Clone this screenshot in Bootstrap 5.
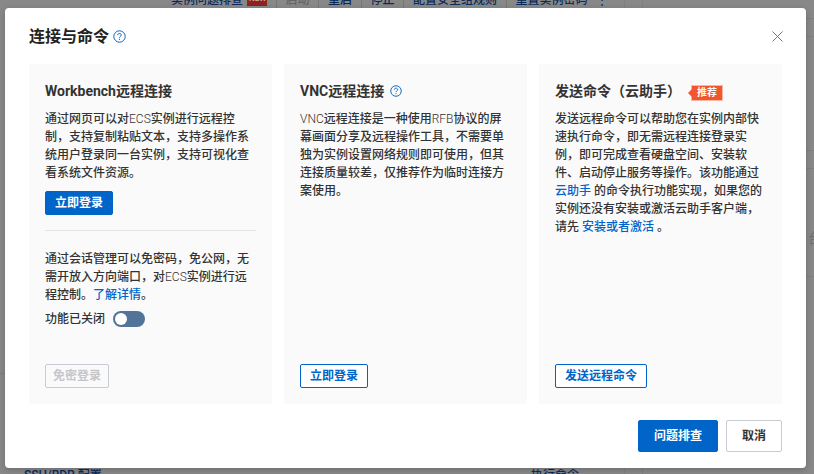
<!doctype html>
<html lang="zh">
<head>
<meta charset="utf-8">
<title>连接与命令</title>
<link href="https://cdn.jsdelivr.net/npm/bootstrap@5.3.0/dist/css/bootstrap.min.css" rel="stylesheet">
<style>
html,body{height:100%;margin:0;overflow:hidden;background:#888;}
body{font-family:Roboto,"Noto Sans CJK SC",sans-serif;font-size:12px;color:#333;position:relative;}
.bg-top{height:8px;overflow:hidden;color:#0b2a5c;font-size:12px;line-height:12px;}
.bg-top-in{margin-top:-6px;margin-left:171px;white-space:nowrap;font-weight:500;}
.bg-new{background:#8c2420;color:#d8b0ac;font-size:8px;line-height:10px;padding:0 2px;height:12px;width:20px;margin-left:4px;overflow:hidden;}
.bg-off{color:#666;}
.bg-sep{width:1px;height:14px;background:#777;margin:0 8.75px;}
.bg-foot{position:absolute;bottom:0;height:5px;overflow:hidden;color:#0b2a5c;font-size:12px;line-height:12px;font-weight:500;}
.bg-line-v{position:absolute;top:0;bottom:0;width:1px;background:#808080;}
.bg-line-h{position:absolute;height:1px;background:#7e7e7e;}
.bg-glyph{position:absolute;left:808px;top:230px;color:#6e6e6e;font-size:14px;line-height:16px;}
.dlg{position:absolute;left:5px;top:8px;width:801px;height:460px;background:#fff;border-radius:4px;box-shadow:0 2px 6px rgba(0,0,0,.2);padding:0 24px;}
.dlg-head{height:56px;padding-top:1px;gap:4px;}
.dlg-title{font-size:16px;font-weight:700;color:#222;line-height:24px;margin:0;}
.qmark{display:inline-block;flex:none;}
.x-btn{position:absolute;right:23px;top:23px;padding:0;border:0;background:none;line-height:0;}
.panels{gap:12px;height:340px;}
.pane{flex:1 1 0;background:#fafafa;padding:16px;min-width:0;}
.pane-title{font-size:14px;font-weight:700;color:#333;line-height:22px;margin:0 0 8px;height:22px;gap:6px;}
.pane-text{line-height:18px;margin:0;color:#333;font-weight:500;width:212px;}
.pane-text a{color:#0064c8;text-decoration:none;}
.pane-text i{font-style:normal;font-weight:300;}
.btn-solid,.btn-line,.btn-off{font-size:12px;font-weight:700;line-height:22px;height:24px;padding:0 9px;border-radius:2px;}
.btn-solid{background:#0064c8;border:1px solid #0064c8;color:#fff;}
.btn-line{background:#fff;border:1px solid #0064c8;color:#0064c8;}
.btn-off,.btn-off:disabled{background:#fafafa;border:1px solid #c8ccd2;color:#c4c6ca;opacity:1;padding:0 7px;}
.btn-bottom{align-self:flex-start;}
.gap-btn{margin-top:9px;}
.rule{height:1px;background:#e3e3e3;margin:15px 0 19px;border:0;opacity:1;width:211px;}
.sw-row{margin-top:7px;height:16px;gap:8px;line-height:16px;font-weight:500;}
.sw{width:32px;height:16px;background:#527498;border-radius:8px;position:relative;flex:none;}
.sw::after{content:"";position:absolute;left:2px;top:2px;width:12px;height:12px;border-radius:50%;background:#fff;}
.tag{background:#f2562f;color:#fff;font-size:10px;font-weight:700;line-height:14px;height:14px;padding:0 5px;position:relative;margin:3px 0 0 5px;box-shadow:0 0 0 1px #fbb7a6;}
.tag::before{content:"";position:absolute;left:-4px;top:3px;border:4px solid transparent;border-left:0;border-right:4px solid #f2562f;}
.dlg-foot{gap:8px;padding-top:16px;}
.ft-btn{height:32px;font-size:12px;font-weight:700;line-height:30px;padding:0;border-radius:2px;}
.ft-main{width:80px;background:#0064c8;border:1px solid #0064c8;color:#fff;}
.ft-plain{width:56px;background:#fff;border:1px solid #c8ccd2;color:#333;}
</style>
</head>
<body>
<div class="bg-top"><div class="bg-top-in d-flex"><span>实例问题排查</span><span class="bg-new">NEW</span><span class="bg-sep"></span><span class="bg-off">启动</span><span class="bg-sep"></span><span>重启</span><span class="bg-sep"></span><span>停止</span><span class="bg-sep"></span><span>配置安全组规则</span><span class="bg-sep"></span><span>重置实例密码</span><span class="ms-2">⋮</span></div></div>
<div class="bg-line-v" style="left:624px"></div>
<div class="bg-line-v" style="left:642px"></div>
<div class="bg-line-h" style="left:0;width:5px;top:373px"></div>
<div class="bg-line-h" style="left:806px;width:8px;top:18px"></div>
<div class="bg-line-h" style="left:806px;width:8px;top:36px"></div>
<div class="bg-line-h" style="left:806px;width:8px;top:150px"></div>
<div class="bg-line-h" style="left:806px;width:8px;top:168px"></div>
<div class="bg-line-h" style="left:806px;width:8px;top:276px"></div>
<div class="bg-glyph">台</div>
<div class="bg-foot" style="left:24px">SSH/RDP 配置</div>
<div class="bg-foot" style="left:531px">执行命令</div>
<div class="dlg">
  <div class="dlg-head d-flex align-items-center">
    <h1 class="dlg-title">连接与命令</h1>
    <svg class="qmark" width="13" height="13" viewBox="0 0 13 13" fill="none" stroke="#0064c8"><circle cx="6.5" cy="6.5" r="5.7"/><path d="M4.7 5.2c0-1.1.8-1.8 1.8-1.8s1.8.7 1.8 1.6c0 1.3-1.8 1.3-1.8 2.7"/><path d="M6.5 8.8v1.1"/></svg>
  </div>
  <button class="x-btn" type="button" aria-label="关闭"><svg width="11" height="11" viewBox="0 0 11 11" stroke="#777" fill="none"><path d="M.5.5l10 10M10.5.5l-10 10"/></svg></button>
  <div class="panels d-flex">
    <div class="pane d-flex flex-column">
      <h2 class="pane-title">Workbench远程连接</h2>
      <p class="pane-text">通过网页可以对<i>ECS</i>实例进行远程控制，支持复制粘贴文本，支持多操作系统用户登录同一台实例，支持可视化查看系统文件资源。</p>
      <div class="gap-btn"><button class="btn btn-solid" type="button">立即登录</button></div>
      <hr class="rule">
      <p class="pane-text">通过会话管理可以免密码，免公网，无需开放入方向端口，对<i>ECS</i>实例进行远程控制。<a href="#">了解详情</a>。</p>
      <div class="sw-row d-flex align-items-center"><span>功能已关闭</span><span class="sw"></span></div>
      <button class="btn btn-off btn-bottom mt-auto" type="button" disabled>免密登录</button>
    </div>
    <div class="pane d-flex flex-column">
      <h2 class="pane-title d-flex align-items-center">VNC远程连接
        <svg class="qmark" width="12" height="12" viewBox="0 0 13 13" fill="none" stroke="#0064c8"><circle cx="6.5" cy="6.5" r="5.7"/><path d="M4.7 5.2c0-1.1.8-1.8 1.8-1.8s1.8.7 1.8 1.6c0 1.3-1.8 1.3-1.8 2.7"/><path d="M6.5 8.8v1.1"/></svg>
      </h2>
      <p class="pane-text"><i>VNC</i>远程连接是一种使用<i>RFB</i>协议的屏幕画面分享及远程操作工具，不需要单独为实例设置网络规则即可使用，但其连接质量较差，仅推荐作为临时连接方案使用。</p>
      <button class="btn btn-line btn-bottom mt-auto" type="button">立即登录</button>
    </div>
    <div class="pane d-flex flex-column">
      <h2 class="pane-title d-flex align-items-center">发送命令（云助手）<span class="tag">推荐</span></h2>
      <p class="pane-text">发送远程命令可以帮助您在实例内部快速执行命令，即无需远程连接登录实例，即可完成查看硬盘空间、安装软件、启动停止服务等操作。该功能通过<a href="#">云助手</a> 的命令执行功能实现，如果您的实例还没有安装或激活云助手客户端，请先 <a href="#">安装或者激活</a> 。</p>
      <button class="btn btn-line btn-bottom mt-auto" type="button">发送远程命令</button>
    </div>
  </div>
  <div class="dlg-foot d-flex justify-content-end">
    <button class="btn ft-btn ft-main" type="button">问题排查</button>
    <button class="btn ft-btn ft-plain" type="button">取消</button>
  </div>
</div>
<script src="https://cdn.jsdelivr.net/npm/bootstrap@5.3.0/dist/js/bootstrap.bundle.min.js"></script>
</body>
</html>
